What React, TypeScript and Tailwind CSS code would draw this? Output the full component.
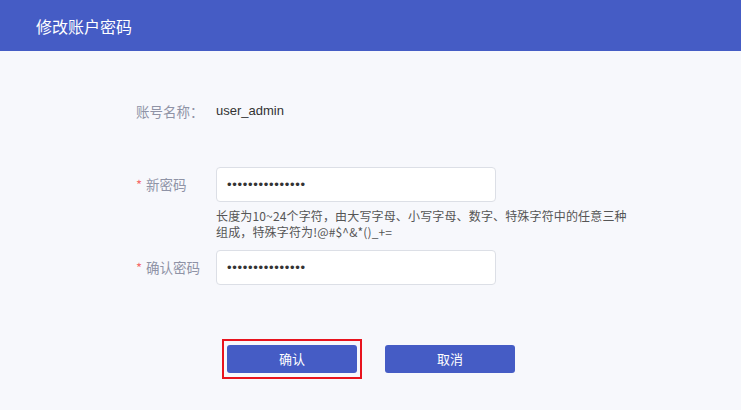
const FONT = "font-['Microsoft_YaHei','Noto_Sans_CJK_SC','Liberation_Sans',sans-serif]";

function Label({ text, required }: { text: string; required?: boolean }) {
  return (
    <div className="w-[80px] shrink-0 flex items-center text-[13.5px] text-[#8f93a6]">
      {required && <span className="text-[#f56c6c] mr-[4px] text-[13px]">*</span>}
      {text}
    </div>
  );
}

function PasswordBox() {
  return (
    <div className="w-[280px] h-[35px] bg-white border border-[#dcdfe6] rounded-[4px] flex items-center pl-[10px]">
      <span className="font-['Liberation_Sans',sans-serif] text-[13px] tracking-[0.7px] text-[#333]">
        •••••••••••••••
      </span>
    </div>
  );
}

export default function App() {
  return (
    <div className={`w-[741px] h-[410px] bg-[#f7f8fc] ${FONT}`}>
      <div className="h-[51px] bg-[#455cc5] flex items-center pl-[36px]">
        <h1 className="text-white text-[16px] pt-[1px]">修改账户密码</h1>
      </div>

      <div className="pl-[136px]">
        <div className="flex items-center h-[20px] mt-[50px]">
          <Label text="账号名称：" />
          <span className="font-['Liberation_Sans',sans-serif] text-[13px] text-[#333]">user_admin</span>
        </div>

        <div className="flex items-center mt-[46px]">
          <Label text="新密码" required />
          <PasswordBox />
        </div>
        <p className="ml-[80px] mt-[6px] w-[412px] text-[12px] leading-[16px] tracking-[0.15px] text-[#555]">
          长度为10~24个字符，由大写字母、小写字母、数字、特殊字符中的任意三种组成，特殊字符为!@#$^&*()_+=
        </p>

        <div className="flex items-center mt-[10px]">
          <Label text="确认密码" required />
          <PasswordBox />
        </div>

        <div className="flex items-center mt-[54px] ml-[86px] gap-[23px]">
          <div className="border-2 border-[#e8141e] px-[3px] py-[4px]">
            <button className="w-[130px] h-[28px] rounded-[3px] bg-[#455cc5] text-white text-[13px]">确认</button>
          </div>
          <button className="w-[130px] h-[28px] rounded-[3px] bg-[#455cc5] text-white text-[13px]">取消</button>
        </div>
      </div>
    </div>
  );
}
